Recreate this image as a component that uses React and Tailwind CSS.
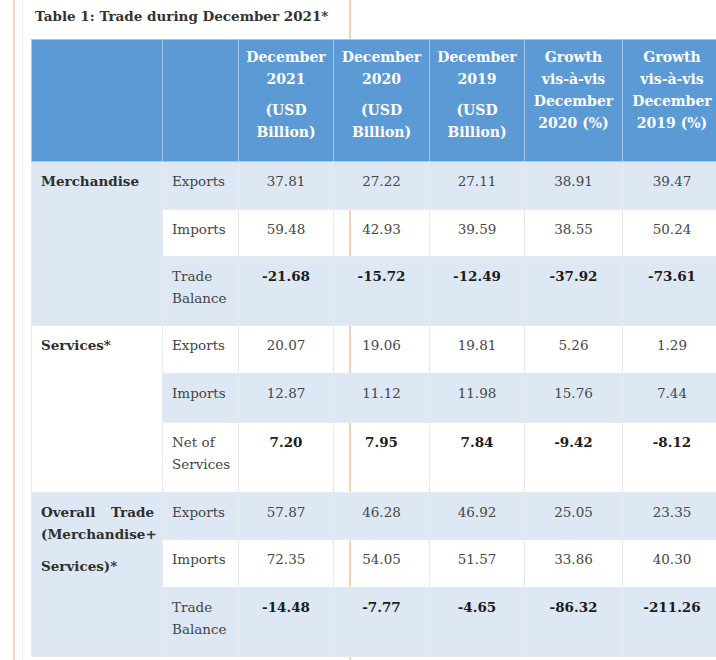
import React from "react";

const font = { fontFamily: '"DejaVu Serif", "Liberation Serif", serif' };

const groups = [
  {
    label: "merch",
    firstBlue: true,
    rows: [
      { name: ["Exports"], vals: ["37.81", "27.22", "27.11", "38.91", "39.47"], h: "h-[48px]" },
      { name: ["Imports"], vals: ["59.48", "42.93", "39.59", "38.55", "50.24"], h: "h-[47px]" },
      { name: ["Trade", "Balance"], vals: ["-21.68", "-15.72", "-12.49", "-37.92", "-73.61"], bold: true, h: "h-[69px]" },
    ],
  },
  {
    label: "serv",
    firstBlue: false,
    rows: [
      { name: ["Exports"], vals: ["20.07", "19.06", "19.81", "5.26", "1.29"], h: "h-[48px]" },
      { name: ["Imports"], vals: ["12.87", "11.12", "11.98", "15.76", "7.44"], h: "h-[49px]" },
      { name: ["Net of", "Services"], vals: ["7.20", "7.95", "7.84", "-9.42", "-8.12"], bold: true, h: "h-[70px]" },
    ],
  },
  {
    label: "overall",
    firstBlue: true,
    rows: [
      { name: ["Exports"], vals: ["57.87", "46.28", "46.92", "25.05", "23.35"], h: "h-[47px]" },
      { name: ["Imports"], vals: ["72.35", "54.05", "51.57", "33.86", "40.30"], h: "h-[48px]" },
      { name: ["Trade", "Balance"], vals: ["-14.48", "-7.77", "-4.65", "-86.32", "-211.26"], bold: true, h: "h-[69px]" },
    ],
  },
];

function GroupLabel({ label }) {
  if (label === "merch") return <div className="font-bold text-[#2f2f2f]">Merchandise</div>;
  if (label === "serv") return <div className="font-bold text-[#2f2f2f]">Services*</div>;
  return (
    <div className="font-bold text-[#2f2f2f]">
      <div className="leading-[22px]">
        <span className="flex justify-between"><span>Overall</span><span>Trade</span></span>
        <span className="block">(Merchandise+</span>
      </div>
      <div className="mt-[10px]">Services)*</div>
    </div>
  );
}

function HeadCell({ lines, sub }) {
  return (
    <th className="border border-[#a9c7e8] align-top pt-[6px] px-1 font-bold text-white text-[14px] leading-[22px] text-center">
      {lines.map((l, i) => (
        <div key={i}>{l}</div>
      ))}
      {sub && (
        <div className="mt-[9px]">
          {sub.map((l, i) => (
            <div key={i}>{l}</div>
          ))}
        </div>
      )}
    </th>
  );
}

export default function App() {
  return (
    <div
      style={font}
      className="relative w-[716px] h-[660px] overflow-hidden bg-white bg-[linear-gradient(to_right,transparent_13px,#f7d6b4_13px,#f7d6b4_15px,transparent_15px,transparent_22px,#efefef_22px,#efefef_23px,transparent_23px,transparent_349px,#f5d3b0_349px,#f5d3b0_351px,transparent_351px)] pl-[31px]"
    >
      <div className="h-[39px] pl-[4px] pt-[5px] text-[13.5px] font-bold text-[#333] leading-[22px] whitespace-nowrap">
        Table 1: Trade during December 2021*
      </div>
      <table className="table-fixed border-collapse w-[690px] text-[13.5px] leading-[22px]">
        <colgroup>
          <col className="w-[131px]" />
          <col className="w-[76px]" />
          <col className="w-[95px]" />
          <col className="w-[96px]" />
          <col className="w-[95px]" />
          <col className="w-[98px]" />
          <col className="w-[99px]" />
        </colgroup>
        <thead>
          <tr className="h-[122px] bg-[#5b9ad5]">
            <th className="border border-[#a9c7e8]"></th>
            <th className="border border-[#a9c7e8]"></th>
            <HeadCell lines={["December", "2021"]} sub={["(USD", "Billion)"]} />
            <HeadCell lines={["December", "2020"]} sub={["(USD", "Billion)"]} />
            <HeadCell lines={["December", "2019"]} sub={["(USD", "Billion)"]} />
            <HeadCell lines={["Growth", "vis-à-vis", "December", "2020 (%)"]} />
            <HeadCell lines={["Growth", "vis-à-vis", "December", "2019 (%)"]} />
          </tr>
        </thead>
        <tbody>
          {groups.map((g) =>
            g.rows.map((r, ri) => {
              const blue = g.firstBlue ? ri % 2 === 0 : ri % 2 === 1;
              const rowBg = blue ? "bg-[#dde8f4]" : "bg-transparent";
              return (
                <tr key={g.label + ri} className={r.h}>
                  {ri === 0 && (
                    <td
                      rowSpan={3}
                      className={`border border-[#e6e9ee] align-top pt-[8px] pl-[9px] pr-[8px] ${
                        g.firstBlue ? "bg-[#dde8f4]" : "bg-white"
                      }`}
                    >
                      <GroupLabel label={g.label} />
                    </td>
                  )}
                  <td className={`border border-[#e6e9ee] align-top pt-[8px] pl-[9px] text-[#454545] ${rowBg}`}>
                    {r.name.map((n, i) => (
                      <div key={i}>{n}</div>
                    ))}
                  </td>
                  {r.vals.map((v, i) => (
                    <td
                      key={i}
                      className={`border border-[#e6e9ee] align-top pt-[8px] text-center ${rowBg} ${
                        r.bold ? "font-bold text-[#1c1c1c]" : "text-[#474747]"
                      }`}
                    >
                      {v}
                    </td>
                  ))}
                </tr>
              );
            })
          )}
        </tbody>
      </table>
    </div>
  );
}
